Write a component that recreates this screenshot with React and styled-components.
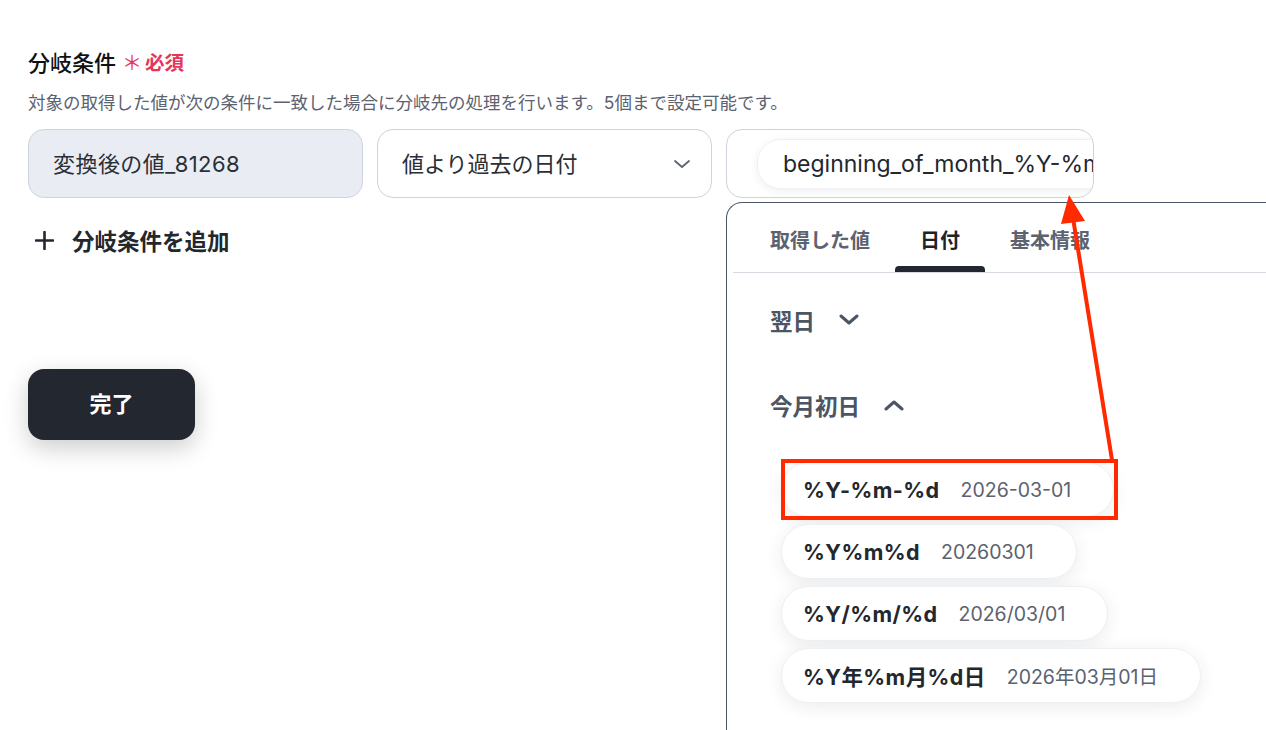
import React from 'react'
import styled, { createGlobalStyle } from 'styled-components'

const GlobalStyle = createGlobalStyle`
    html, body {
        margin: 0;
        background: #fff;
        overflow: hidden;
    }
    body {
        font-family: Inter, "Noto Sans CJK JP", sans-serif;
        color: #1f2329;
    }
`

const Page = styled.div`
    position: relative;
    width: 1266px;
    height: 730px;
    box-sizing: border-box;
    padding: 44px 28px 0;
    overflow: hidden;
`

const Title = styled.div`
    display: flex;
    align-items: center;
    height: 34px;
    font-size: 22px;
    font-weight: 500;
    color: #111;

    .required {
        display: flex;
        align-items: center;
        margin-left: 6px;
        color: #e8335b;
        font-size: 19.5px;
        font-weight: 700;
    }
    .star {
        font-size: 20px;
        font-weight: 400;
        margin-right: 3px;
        line-height: 1;
        transform: translateY(2px);
    }
`

const Description = styled.p`
    margin: 12px 0 0;
    font-size: 17.5px;
    line-height: 26px;
    color: #5b6270;
`

const Row = styled.div`
    display: flex;
    gap: 14px;
    margin-top: 13px;
`

const Field = styled.div`
    box-sizing: border-box;
    width: ${p => p.$width}px;
    height: 69px;
    border: 1px solid #cfd4dc;
    border-radius: 16px;
    background: ${p => (p.$muted ? '#e9ecf3' : '#fff')};
    display: flex;
    align-items: center;
    justify-content: space-between;
    padding: 0 20px 4px 24px;
    font-size: 22px;
    letter-spacing: ${p => (p.$muted ? '0.02em' : '0')};
    color: #2b2f36;

    svg {
        margin-top: 4px;
    }
`

const ValueField = styled.div`
    position: relative;
    width: 368px;
    height: 69px;
`

const ValueFrame = styled.div`
    box-sizing: border-box;
    height: 100%;
    border: 1px solid #cfd4dc;
    border-radius: 16px;
    overflow: hidden;
    display: flex;
    align-items: center;
    padding-left: 30px;
`

const Token = styled.div`
    flex: none;
    height: 48px;
    border-radius: 24px;
    border: 1px solid #eef0f3;
    box-shadow: 0 2px 8px rgba(30, 40, 60, 0.08);
    display: flex;
    align-items: center;
    padding: 0 24px 0 25px;
    font-size: 23px;
    white-space: nowrap;
    color: #23272e;
`

const Popover = styled.div`
    position: absolute;
    top: 73px;
    left: 0;
    width: 600px;
    height: 600px;
    background: #fff;
    border-top: 1px solid #4b5563;
    border-left: 1px solid #4b5563;
    border-top-left-radius: 16px;
`

const Tabs = styled.div`
    display: flex;
    margin-left: 6px;
    padding-left: 12px;
    border-bottom: 1px solid #d5dae1;
`

const Tab = styled.div`
    position: relative;
    height: 69px;
    box-sizing: border-box;
    padding: 26px 25px 0;
    font-size: 20px;
    line-height: 24px;
    font-weight: 600;
    color: ${p => (p.$active ? '#1f2329' : '#5b6270')};

    &::after {
        content: '';
        display: ${p => (p.$active ? 'block' : 'none')};
        position: absolute;
        left: 0;
        right: 0;
        bottom: 0;
        height: 6px;
        border-radius: 4px 4px 0 0;
        background: #23272f;
    }
`

const Body = styled.div`
    padding: 31px 0 0 43px;
`

const GroupHeader = styled.div`
    display: flex;
    align-items: center;
    gap: 24px;
    height: 32px;
    margin-bottom: ${p => p.$gap}px;
    font-size: 22.5px;
    font-weight: 700;
    color: #4b5563;
`

const Options = styled.div`
    display: flex;
    flex-direction: column;
    align-items: flex-start;
    gap: 7px;
    margin-left: 11px;
`

const Option = styled.div`
    box-sizing: border-box;
    height: 55px;
    display: flex;
    align-items: center;
    gap: 21px;
    padding: 0 42px 0 21px;
    border: 1px solid #eef0f3;
    border-radius: 28px;
    background: #fff;
    box-shadow: 0 4px 18px rgba(30, 40, 60, 0.09);

    b {
        font-size: 21.5px;
        font-weight: 700;
        letter-spacing: 0.02em;
        color: #23272e;
    }
    span {
        font-size: 19.5px;
        color: #5b6270;
    }
`

const AddButton = styled.div`
    display: flex;
    align-items: center;
    gap: 18px;
    margin-top: 27px;
    padding-left: 7px;
    height: 30px;
    font-size: 22.5px;
    font-weight: 700;
    color: #23272e;
`

const DoneButton = styled.button`
    margin-top: 114px;
    width: 167px;
    height: 71px;
    padding: 0 0 5px;
    border: none;
    border-radius: 16px;
    background: #23272f;
    color: #fff;
    font-family: inherit;
    font-size: 22px;
    font-weight: 700;
    box-shadow: 0 8px 24px rgba(0, 0, 0, 0.2);
`

const Overlay = styled.svg`
    position: absolute;
    top: 0;
    left: 0;
    pointer-events: none;
`

const Chevron = ({ up }) => (
    <svg width="20" height="12" viewBox="0 0 20 12">
        <polyline
            points={up ? '2,10 10,3 18,10' : '2,2 10,9 18,2'}
            fill="none"
            stroke="#4b5563"
            strokeWidth="3"
            strokeLinecap="round"
            strokeLinejoin="round"
        />
    </svg>
)

const formats = [
    { fmt: '%Y-%m-%d', value: '2026-03-01' },
    { fmt: '%Y%m%d', value: '20260301' },
    { fmt: '%Y/%m/%d', value: '2026/03/01' },
    { fmt: '%Y年%m月%d日', value: '2026年03月01日' },
]

const App = () => (
    <>
        <GlobalStyle />
        <Page>
            <Title>
                分岐条件
                <span className="required"><span className="star">＊</span>必須</span>
            </Title>
            <Description>対象の取得した値が次の条件に一致した場合に分岐先の処理を行います。5個まで設定可能です。</Description>
            <Row>
                <Field $width={335} $muted>変換後の値_81268</Field>
                <Field $width={335}>
                    値より過去の日付
                    <svg width="18" height="10" viewBox="0 0 18 10">
                        <polyline points="2,2 9,8 16,2" fill="none" stroke="#5b6270" strokeWidth="1.8" strokeLinecap="round" strokeLinejoin="round" />
                    </svg>
                </Field>
                <ValueField>
                    <ValueFrame>
                        <Token>beginning_of_month_%Y-%m-%d</Token>
                    </ValueFrame>
                    <Popover>
                        <Tabs>
                            <Tab>取得した値</Tab>
                            <Tab $active>日付</Tab>
                            <Tab>基本情報</Tab>
                        </Tabs>
                        <Body>
                            <GroupHeader $gap={53}>翌日<Chevron /></GroupHeader>
                            <GroupHeader $gap={41}>今月初日<Chevron up /></GroupHeader>
                            <Options>
                                {formats.map(f => (
                                    <Option key={f.fmt}>
                                        <b>{f.fmt}</b>
                                        <span>{f.value}</span>
                                    </Option>
                                ))}
                            </Options>
                        </Body>
                    </Popover>
                </ValueField>
            </Row>
            <AddButton>
                <svg width="19" height="19" viewBox="0 0 19 19">
                    <path d="M9.5 1v17M1 9.5h17" stroke="#23272e" strokeWidth="2.6" strokeLinecap="round" />
                </svg>
                分岐条件を追加
            </AddButton>
            <DoneButton>完了</DoneButton>

            <Overlay width="1266" height="730" viewBox="0 0 1266 730">
                <rect x="783" y="461" width="333" height="57" fill="none" stroke="#ff2a00" strokeWidth="4" />
                <line x1="1112" y1="460" x2="1073" y2="218" stroke="#ff2a00" strokeWidth="4" />
                <polygon points="1069,195 1085,221 1061,224" fill="#ff2a00" />
            </Overlay>
        </Page>
    </>
)

export default App
